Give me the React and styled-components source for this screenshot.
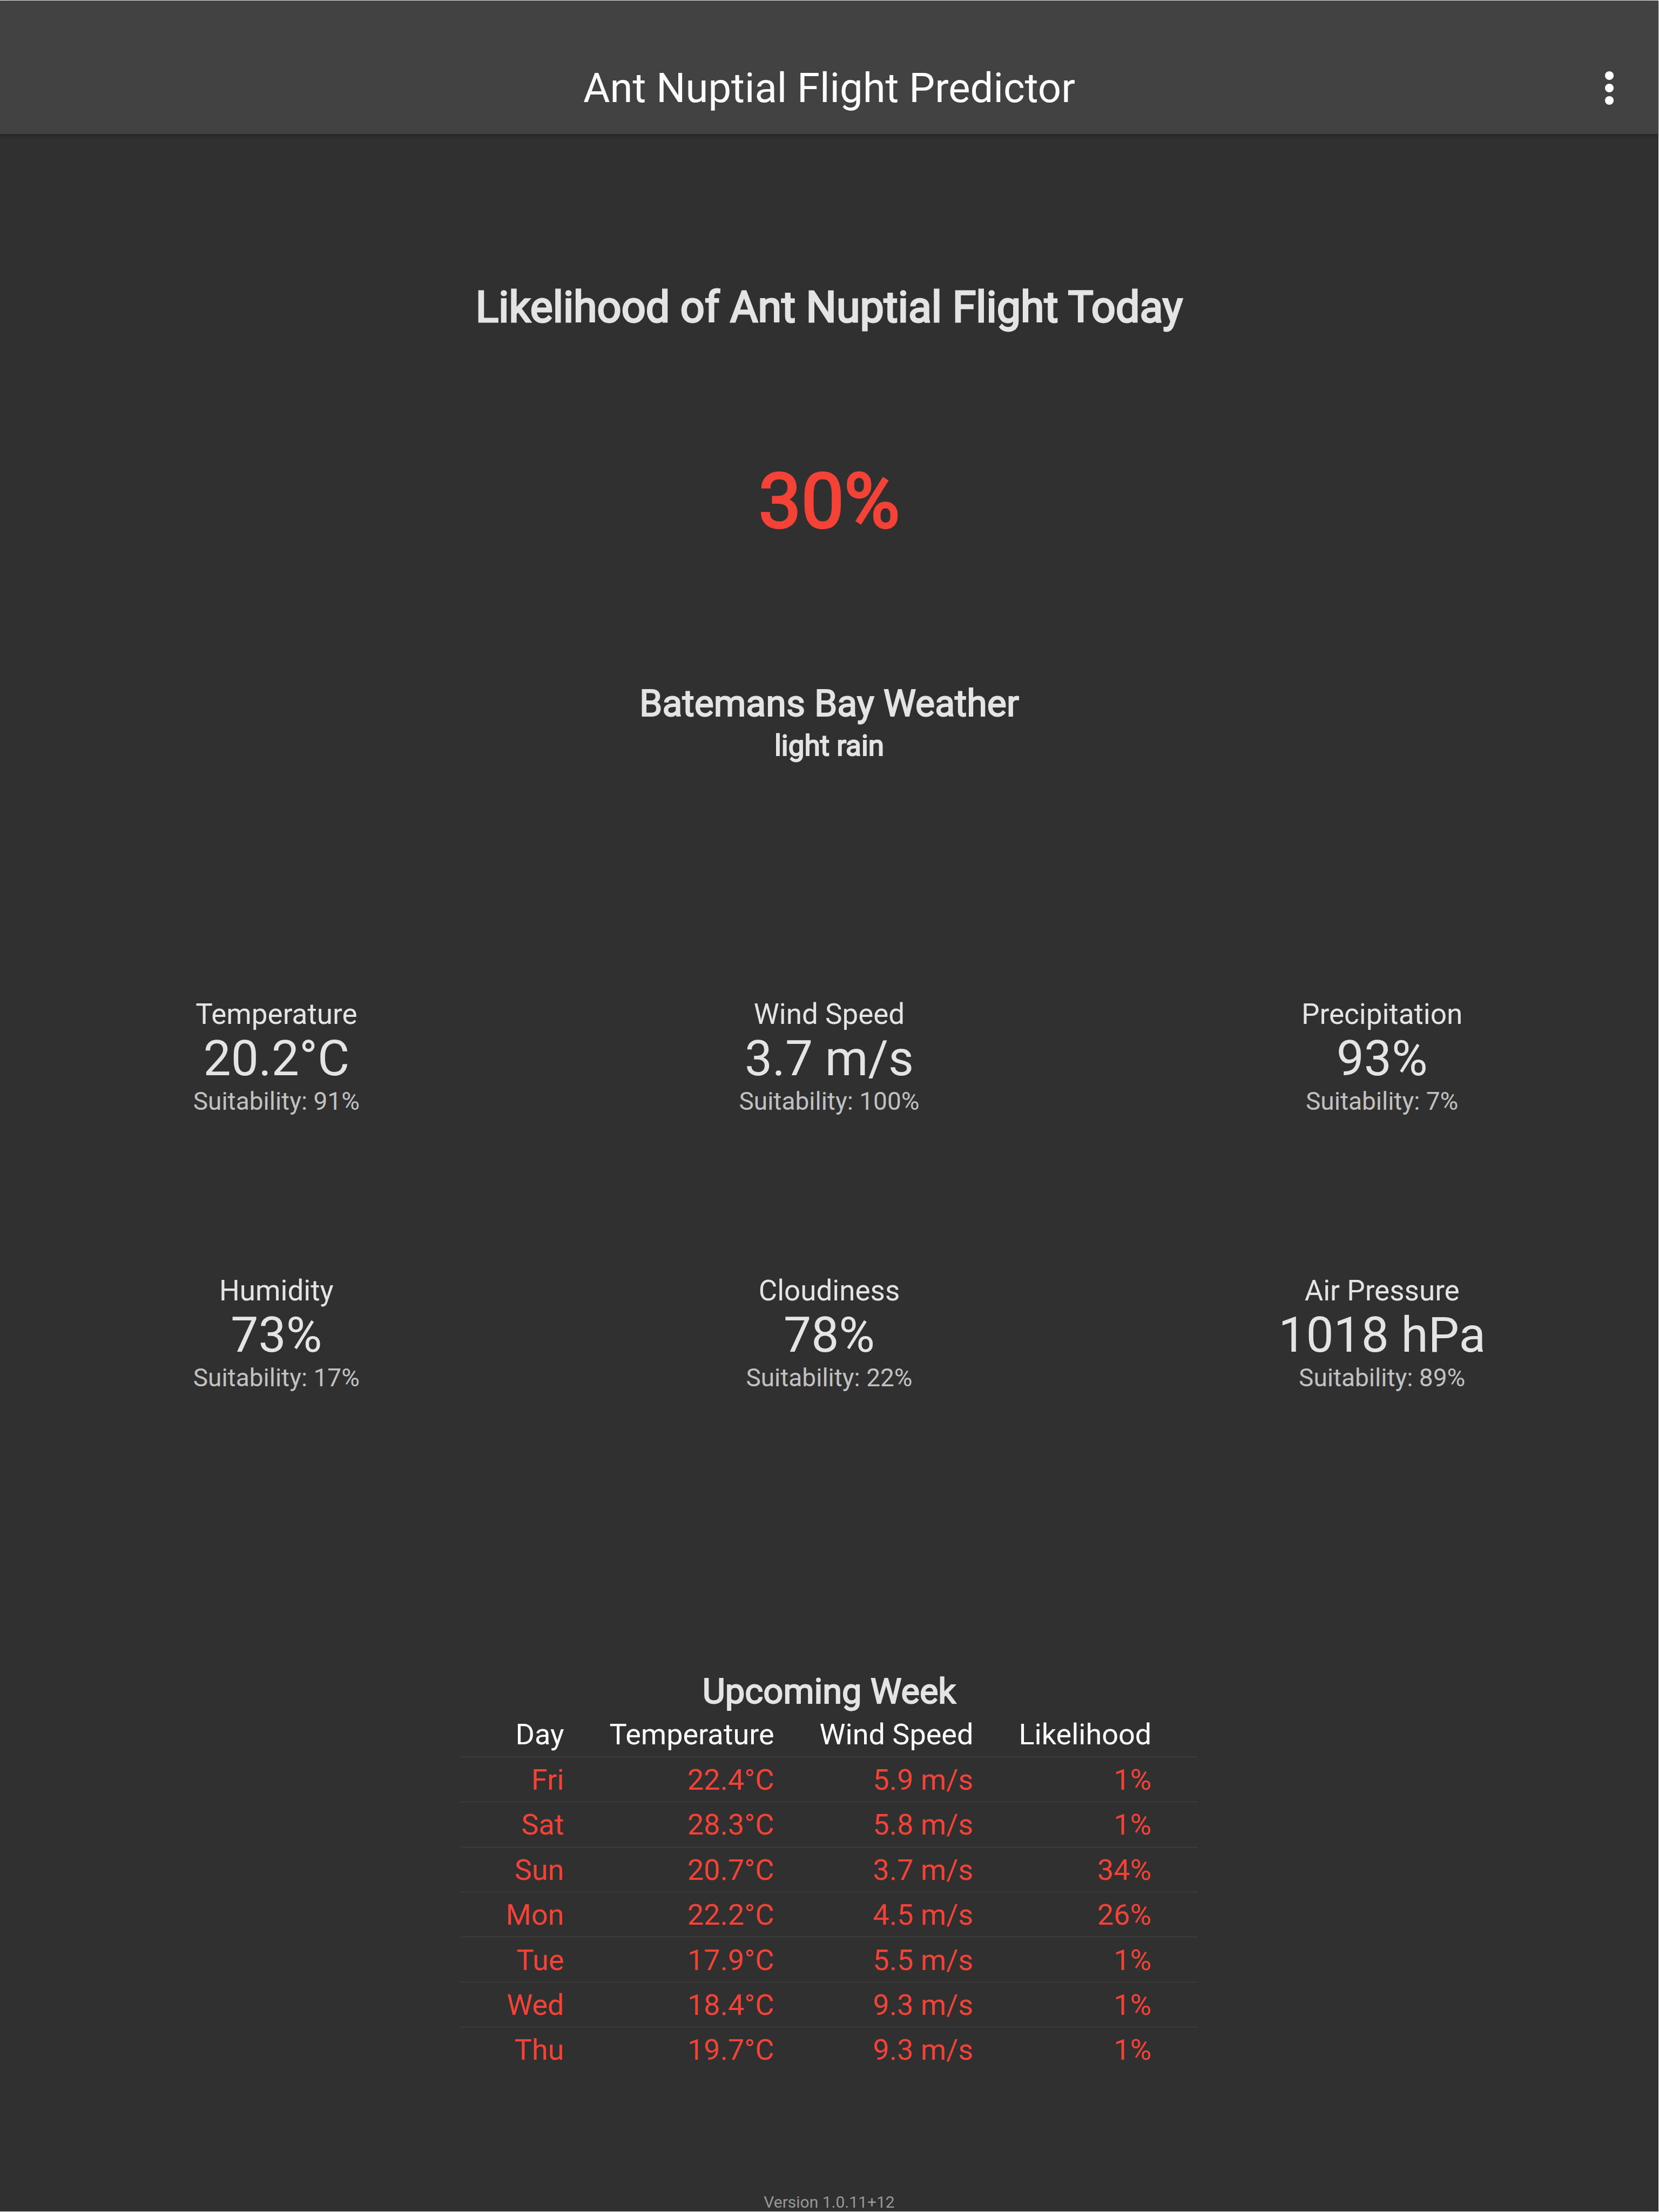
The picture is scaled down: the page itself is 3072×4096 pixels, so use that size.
import React from 'react';
import styled, { createGlobalStyle } from 'styled-components';

const GlobalStyle = createGlobalStyle`
  *, *::before, *::after { box-sizing: border-box; }
  body {
    margin: 0;
    background: #303030;
    color: #e4e4e4;
    font-family: Roboto, "Liberation Sans", sans-serif;
    font-weight: 400;
  }
  h1, h2, h3, p, dl, dt, dd { margin: 0; font-weight: 400; }
`;

const Page = styled.div`
  display: flex;
  flex-direction: column;
  min-height: 100vh;
  border: 1px solid #fff;
  border-left: 0;
`;

const AppBar = styled.header`
  display: grid;
  grid-template-columns: 1fr auto 1fr;
  align-items: center;
  height: 247px;
  padding: 77px 45px 0;
  background: #424242;
  color: #fff;
  box-shadow: 0 2px 10px rgba(0, 0, 0, 0.3);
`;

const AppTitle = styled.h1`
  grid-column: 2;
  font-size: 76px;
  line-height: 90px;
`;

const MenuButton = styled.button`
  grid-column: 3;
  justify-self: end;
  display: flex;
  padding: 0;
  border: 0;
  background: none;
  color: inherit;
  cursor: pointer;
`;

const MenuIcon = styled.svg`
  width: 92px;
  height: 92px;
  fill: currentColor;
`;

const Main = styled.main`
  display: flex;
  flex-direction: column;
`;

const Heading = styled.h2`
  font-size: ${({ $size }) => $size}px;
  line-height: ${({ $line }) => $line}px;
  -webkit-text-stroke: ${({ $stroke = 2 }) => $stroke}px currentColor;
`;

const Today = styled.section`
  display: flex;
  flex-direction: column;
  align-items: center;
  gap: 230px;
  padding-top: 274px;
`;

const Chance = styled.p`
  color: #f44336;
  font-size: 141px;
  line-height: 166px;
  -webkit-text-stroke: 4px currentColor;
`;

const Weather = styled.section`
  display: flex;
  flex-direction: column;
  align-items: center;
  padding-top: 248px;
`;

const Conditions = styled.p`
  font-size: 53px;
  line-height: 70px;
  -webkit-text-stroke: 2px currentColor;
`;

const Metrics = styled.dl`
  display: grid;
  grid-template-columns: repeat(3, 1fr);
  width: 100%;
  padding-top: 285px;
`;

const Metric = styled.div`
  display: flex;
  flex-direction: column;
  align-items: center;
  justify-content: center;
  aspect-ratio: 2;
`;

const MetricLabel = styled.dt`
  font-size: 53px;
  line-height: 58px;
`;

const MetricValue = styled.dd`
  font-size: 91px;
  line-height: 106px;
`;

const MetricNote = styled.dd`
  color: #c1c1c1;
  font-size: 46px;
  line-height: 52px;
`;

const Week = styled.section`
  display: flex;
  flex-direction: column;
  align-items: center;
  padding-top: 369px;
`;

const Forecast = styled.table`
  height: 668px;
  border-collapse: separate;
  border-spacing: 0;
  font-size: 54px;
  line-height: 62px;
  text-align: right;
`;

const HeadRow = styled.tr`
  height: 84px;
`;

const Cell = styled.td`
  padding: 2px 42px 0;
  border-bottom: 1px solid #444;
  color: #f44336;
  font-weight: 400;
  white-space: nowrap;

  &:first-child { padding-left: 84px; }
  &:last-child { padding-right: 86px; }
  tbody tr:last-child > & { border-bottom-color: transparent; }
`;

const HeadCell = styled(Cell)`
  color: #fff;
`;

const Footer = styled.footer`
  margin-top: auto;
  color: #989898;
  font-size: 30px;
  line-height: 35px;
  text-align: center;
`;

const metrics = [
  { label: 'Temperature', value: '20.2°C', suitability: 91 },
  { label: 'Wind Speed', value: '3.7 m/s', suitability: 100 },
  { label: 'Precipitation', value: '93%', suitability: 7 },
  { label: 'Humidity', value: '73%', suitability: 17 },
  { label: 'Cloudiness', value: '78%', suitability: 22 },
  { label: 'Air Pressure', value: '1018 hPa', suitability: 89 },
];

const columns = ['Day', 'Temperature', 'Wind Speed', 'Likelihood'];

const forecast = [
  ['Fri', '22.4°C', '5.9 m/s', '1%'],
  ['Sat', '28.3°C', '5.8 m/s', '1%'],
  ['Sun', '20.7°C', '3.7 m/s', '34%'],
  ['Mon', '22.2°C', '4.5 m/s', '26%'],
  ['Tue', '17.9°C', '5.5 m/s', '1%'],
  ['Wed', '18.4°C', '9.3 m/s', '1%'],
  ['Thu', '19.7°C', '9.3 m/s', '1%'],
];

export default function App() {
  return (
    <Page>
      <GlobalStyle />
      <AppBar>
        <AppTitle>Ant Nuptial Flight Predictor</AppTitle>
        <MenuButton type="button" aria-label="More options">
          <MenuIcon viewBox="0 0 24 24" aria-hidden="true">
            <circle cx="12" cy="6" r="2.1" />
            <circle cx="12" cy="12" r="2.1" />
            <circle cx="12" cy="18" r="2.1" />
          </MenuIcon>
        </MenuButton>
      </AppBar>
      <Main>
        <Today>
          <Heading $size={79} $line={94} $stroke={3}>Likelihood of Ant Nuptial Flight Today</Heading>
          <Chance>30%</Chance>
        </Today>
        <Weather>
          <Heading $size={68} $line={86}>Batemans Bay Weather</Heading>
          <Conditions>light rain</Conditions>
        </Weather>
        <Metrics>
          {metrics.map(({ label, value, suitability }) => (
            <Metric key={label}>
              <MetricLabel>{label}</MetricLabel>
              <MetricValue>{value}</MetricValue>
              <MetricNote>Suitability: {suitability}%</MetricNote>
            </Metric>
          ))}
        </Metrics>
        <Week>
          <Heading $size={65} $line={76}>Upcoming Week</Heading>
          <Forecast>
            <thead>
              <HeadRow>
                {columns.map((name) => (
                  <HeadCell as="th" scope="col" key={name}>{name}</HeadCell>
                ))}
              </HeadRow>
            </thead>
            <tbody>
              {forecast.map((row) => (
                <tr key={row[0]}>
                  {row.map((text, i) => (
                    <Cell key={columns[i]}>{text}</Cell>
                  ))}
                </tr>
              ))}
            </tbody>
          </Forecast>
        </Week>
      </Main>
      <Footer>Version 1.0.11+12</Footer>
    </Page>
  );
}
